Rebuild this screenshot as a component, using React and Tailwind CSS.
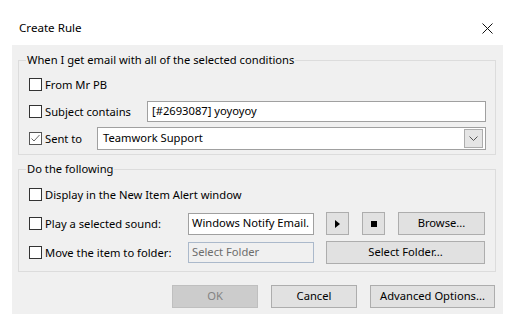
import React from 'react'

const font = { fontFamily: '"Noto Sans", "Liberation Sans", sans-serif' }

function Checkbox({ checked, label }) {
  return (
    <label className="flex items-center gap-[3px] text-[11.2px] text-black">
      <span className={`w-[13px] h-[13px] border flex items-center justify-center bg-white ${checked ? 'border-[#555]' : 'border-[#333]'}`}>
        {checked && (
          <svg width="11" height="11" viewBox="0 0 11 11">
            <path d="M1.5 5.5 L4 8 L9.5 2" fill="none" stroke="#666" strokeWidth="1" />
          </svg>
        )}
      </span>
      <span className="leading-[16px]">{label}</span>
    </label>
  )
}

function Button({ children, className = '', disabled }) {
  return (
    <button
      className={`h-[23px] border text-[11.2px] flex items-center justify-center ${disabled ? 'bg-[#cccccc] border-[#bfbfbf] text-[#838383]' : 'bg-[#e1e1e1] border-[#adadad] text-black'} ${className}`}
    >
      {children}
    </button>
  )
}

function Group({ title, className = '', children }) {
  return (
    <div className={`relative border border-[#dcdcdc] ${className}`}>
      <span className="absolute left-[7px] top-[-9px] px-[1px] bg-[#f0f0f0] text-[11.2px] leading-[16px] text-black">{title}</span>
      {children}
    </div>
  )
}

export default function App() {
  return (
    <div className="w-[516px] h-[329px] bg-white overflow-hidden" style={font}>
      {/* Title bar */}
      <div className="h-[45px] flex items-start justify-between pl-[19px] pr-[23px] pt-[20px]">
        <span className="text-[11.6px] leading-[16px] text-black">Create Rule</span>
        <svg width="11" height="11" viewBox="0 0 11 11" className="mt-[3px]">
          <path d="M0.5 0.5 L10.5 10.5 M10.5 0.5 L0.5 10.5" stroke="#111" strokeWidth="1" />
        </svg>
      </div>

      <div className="ml-[12px] w-[491px] h-[269px] bg-[#f0f0f0] pt-[15px] pl-[6px] pr-[7px] flex flex-col">
        <Group title="When I get email with all of the selected conditions" className="h-[95px] pt-[13px] pl-[10px] pr-[9px] flex flex-col">
          <div className="h-[21px] flex items-center">
            <Checkbox label="From Mr PB" />
          </div>
          <div className="h-[21px] mt-[6px] flex items-center justify-between">
            <Checkbox label="Subject contains" />
            <div className="w-[339px] h-[21px] bg-white border border-[#a0a0a0] px-[4px] flex items-center text-[11.2px] text-black">[#2693087] yoyoyoy</div>
          </div>
          <div className="h-[23px] mt-[5px] flex items-center justify-between">
            <Checkbox checked label="Sent to" />
            <div className="w-[389px] h-[23px] bg-white border border-[#a0a0a0] pl-[5px] pr-[2px] flex items-center justify-between text-[11.2px] text-black">
              <span>Teamwork Support</span>
              <span className="w-[19px] h-[19px] bg-[#e5e5e5] border border-[#adadad] flex items-center justify-center">
                <svg width="9" height="5" viewBox="0 0 9 5">
                  <path d="M0.5 0.5 L4.5 4.5 L8.5 0.5" fill="none" stroke="#555" strokeWidth="1" />
                </svg>
              </span>
            </div>
          </div>
        </Group>

        <Group title="Do the following" className="mt-[14px] h-[103px] pt-[14px] pl-[10px] pr-[10px] flex flex-col">
          <div className="h-[21px] flex items-center">
            <Checkbox label="Display in the New Item Alert window" />
          </div>
          <div className="h-[23px] mt-[7px] flex items-center">
            <div className="w-[159px]">
              <Checkbox label="Play a selected sound:" />
            </div>
            <div className="w-[126px] h-[22px] bg-white border border-[#a0a0a0] px-[3px] flex items-center text-[11.2px] text-black whitespace-nowrap overflow-hidden">Windows Notify Email.</div>
            <Button className="w-[23px] ml-[12px]">
              <svg width="5" height="8" viewBox="0 0 5 8"><path d="M0 0 L5 4 L0 8 Z" fill="#000" /></svg>
            </Button>
            <Button className="w-[23px] ml-[13px]">
              <span className="w-[6px] h-[6px] bg-black" />
            </Button>
            <Button className="w-[87px] ml-[13px]">Browse...</Button>
          </div>
          <div className="h-[23px] mt-[6px] flex items-center">
            <div className="w-[159px]">
              <Checkbox label="Move the item to folder:" />
            </div>
            <div className="w-[126px] h-[21px] bg-[#f0f0f0] border border-[#abb9cb] px-[3px] flex items-center text-[11.2px] text-[#6d6d6d]">Select Folder</div>
            <Button className="w-[159px] ml-[12px]">Select Folder...</Button>
          </div>
        </Group>

        <div className="mt-[13px] flex justify-end gap-[13px] pr-[1px]">
          <Button disabled className="w-[86px]">OK</Button>
          <Button className="w-[86px]">Cancel</Button>
          <Button className="w-[125px]">Advanced Options...</Button>
        </div>
      </div>
    </div>
  )
}
